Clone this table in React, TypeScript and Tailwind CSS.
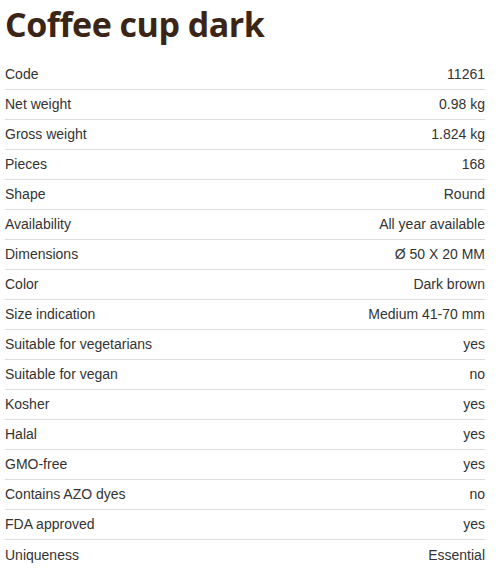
import React from "react";

const rows: [string, string][] = [
  ["Code", "11261"],
  ["Net weight", "0.98 kg"],
  ["Gross weight", "1.824 kg"],
  ["Pieces", "168"],
  ["Shape", "Round"],
  ["Availability", "All year available"],
  ["Dimensions", "Ø 50 X 20 MM"],
  ["Color", "Dark brown"],
  ["Size indication", "Medium 41-70 mm"],
  ["Suitable for vegetarians", "yes"],
  ["Suitable for vegan", "no"],
  ["Kosher", "yes"],
  ["Halal", "yes"],
  ["GMO-free", "yes"],
  ["Contains AZO dyes", "no"],
  ["FDA approved", "yes"],
  ["Uniqueness", "Essential"],
];

export default function App() {
  return (
    <div className="bg-white w-[503px] h-[568px] overflow-hidden pl-[5px] pt-[4px]">
      <h1
        className="text-[34px] leading-[40px] font-bold tracking-[-0.5px] text-[#3a2516] m-0"
        style={{ fontFamily: "'Open Sans', 'Noto Sans', sans-serif" }}
      >
        Coffee cup dark
      </h1>
      <div
        className="w-[480px] mt-[16px] text-[14px] text-[#333333]"
        style={{ fontFamily: "'Liberation Sans', Arial, sans-serif" }}
      >
        {rows.map(([k, v], i) => (
          <div
            key={k}
            className={
              "flex justify-between items-center h-[30px] " +
              (i < rows.length - 1 ? "border-b border-[#dddddd]" : "")
            }
          >
            <span>{k}</span>
            <span>{v}</span>
          </div>
        ))}
      </div>
    </div>
  );
}
